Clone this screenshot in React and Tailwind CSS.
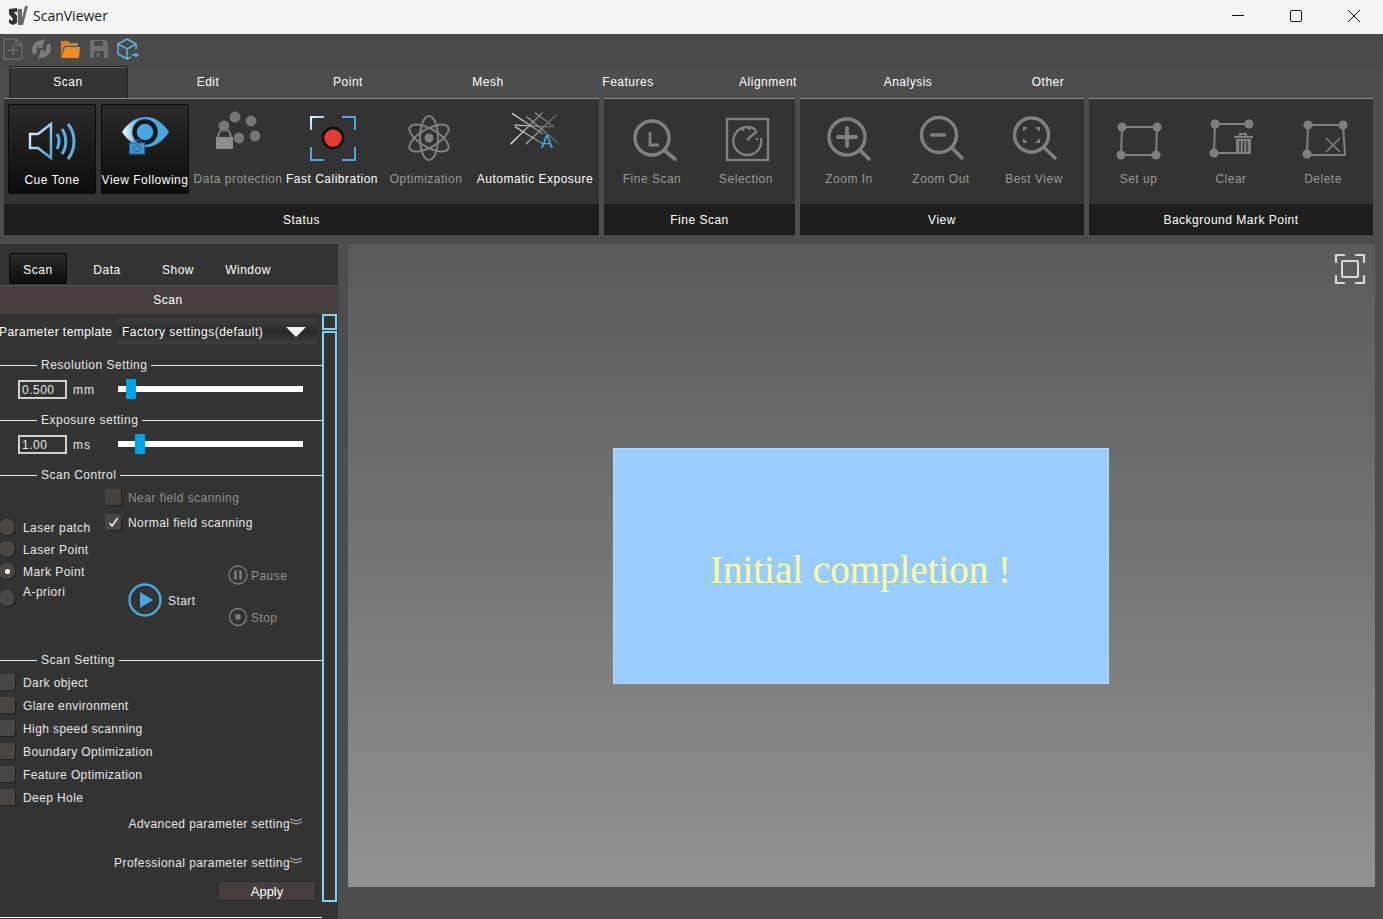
const Ring = ({ cx, cy, r = 17, x2, y2, c = "#808080" }) => (
  <>
    <circle cx={cx} cy={cy} r={r} fill="none" stroke={c} strokeWidth="3.4" />
    <path d={`M${cx + r * 0.72} ${cy + r * 0.72}L${x2} ${y2}`} stroke={c} strokeWidth="3.6" strokeLinecap="round" />
  </>
);

const Corners = ({ x1, y1, x2, y2, w = 2 }) => (
  <g fill="none" strokeWidth={w}>
    <path d={`M${x1} ${y1 + 13}V${y1}H${x1 + 13}`} stroke="url(#whiteBlue)" />
    <path d={`M${x2 - 13} ${y1}H${x2}V${y1 + 13}`} stroke="#4aa8e0" />
    <path d={`M${x1} ${y2 - 13}V${y2}H${x1 + 13}`} stroke="#4aa8e0" />
    <path d={`M${x2 - 13} ${y2}H${x2}V${y2 - 13}`} stroke="#4aa8e0" />
  </g>
);

const Dots = ({ pts }) => pts.map(([x, y]) => <circle key={`${x}-${y}`} cx={x} cy={y} r="4.5" fill="#808080" />);

const icons = {
  tone: (
    <>
      <path d="M8 23h8l13-10v34L16 37H8z" fill="none" stroke="url(#whiteBlue)" strokeWidth="2.4" />
      <path d="M35 23c2.500 4 2.500 10 0 15M40 18c5 7 5 18 0 25M46 13c8 10 8 25 0 35" fill="none" stroke="#58b2e6" strokeWidth="3" />
    </>
  ),
  eye: (
    <>
      <path d="M7 21C16 7 27 6 31 6c9 0 17 6 23 15-6 9-14 15-23 15-10 0-18-6-24-15z" fill="url(#eyeFill)" />
      <circle cx="30" cy="21" r="10.500" fill="#4aa8e0" stroke="#15181b" strokeWidth="4.500" />
      <rect x="14.500" y="32" width="15" height="11" fill="#3f95cb" stroke="#1d6d9f" strokeWidth="1" />
      <path d="M18 32l2-3h5l2 3" fill="none" stroke="#1d6d9f" />
      <circle cx="22" cy="37.500" r="3.200" fill="none" stroke="#1d6d9f" />
    </>
  ),
  lock: (
    <>
      <path d="M10 28c0-12 13-12 13 0" fill="none" stroke="#8c8c8c" strokeWidth="1.600" />
      <circle cx="27" cy="7" r="5.400" fill="#777" />
      <circle cx="43" cy="11" r="5.400" fill="#777" />
      <circle cx="16" cy="16" r="5.400" fill="#777" />
      <circle cx="31" cy="28" r="5.400" fill="#777" />
      <circle cx="47" cy="26" r="5.400" fill="#777" />
      <rect x="8" y="27" width="17" height="12" fill="#8c8c8c" />
    </>
  ),
  calibrate: (
    <>
      <Corners x1={9} y1={7} x2={53} y2={50} />
      <circle cx="31" cy="28" r="10" fill="#e53a33" stroke="#0c0c0c" strokeWidth="2.500" />
    </>
  ),
  atom: (
    <g fill="none" stroke="#808080" strokeWidth="2">
      <ellipse cx="33" cy="28" rx="22" ry="9" transform="rotate(90 33 28)" />
      <ellipse cx="33" cy="28" rx="22" ry="9" transform="rotate(30 33 28)" />
      <ellipse cx="33" cy="28" rx="22" ry="9" transform="rotate(-30 33 28)" />
      <circle cx="33" cy="28" r="4.500" fill="#808080" stroke="none" />
    </g>
  ),
  exposure: (
    <>
      <g stroke="url(#whiteGray)" strokeWidth="1.100">
        <path d="M7 3.300L38 24M30 2.700L49 16.700M10 16.700L38 34M21.700 6.700L53 33" />
        <path d="M37.700 2.300L5.700 34M51.700 4.300L21 34M9 15L49 17" />
      </g>
      <text x="36" y="38" fill="#4aa8e0" fontSize="18" fontFamily="Liberation Sans, sans-serif">A</text>
    </>
  ),
  fineScan: (
    <>
      <Ring cx={30} cy={28} r={17} x2={53} y2={49} />
      <path d="M28 22v13h9" fill="none" stroke="#808080" strokeWidth="2.800" />
    </>
  ),
  selection: (
    <>
      <rect x="11" y="9" width="41" height="41" fill="none" stroke="#808080" strokeWidth="2.400" />
      <path d="M40 20a14 14 0 1 0 5 8" fill="none" stroke="#808080" strokeWidth="2.400" />
      <path d="M31 30l10-9" stroke="#808080" strokeWidth="2.400" />
      <circle cx="27" cy="20" r="1" fill="#aaa" />
      <circle cx="33" cy="19" r="1" fill="#aaa" />
      <circle cx="41" cy="29" r="1" fill="#aaa" />
    </>
  ),
  zoomIn: (
    <>
      <Ring cx={28} cy={27} r={18} x2={50} y2={49} />
      <path d="M19 27h18M28 18v18" stroke="#808080" strokeWidth="3.800" strokeLinecap="round" />
    </>
  ),
  zoomOut: (
    <>
      <Ring cx={28} cy={25} r={17.500} x2={51} y2={48} />
      <path d="M20.500 25h13" stroke="#808080" strokeWidth="3.600" strokeLinecap="round" />
    </>
  ),
  bestView: (
    <>
      <Ring cx={27.500} cy={25} r={17} x2={51} y2={48} />
      <path d="M20 21v-3h3M32 18h3v3M20 29v3h3M32 32h3v-3" fill="none" stroke="#808080" strokeWidth="2" />
    </>
  ),
  setUp: (
    <>
      <path d="M13 17H48L47 45H12Z" fill="none" stroke="#808080" strokeWidth="2" />
      <Dots pts={[[13, 17], [48, 17], [12, 45], [47, 45]]} />
    </>
  ),
  clear: (
    <>
      <path d="M48 14H14L13 43H38" fill="none" stroke="#808080" strokeWidth="2" />
      <Dots pts={[[14, 14], [48, 14], [13, 43]]} />
      <path d="M33 27h19M39 27v-3h6v3" fill="none" stroke="#808080" strokeWidth="2" />
      <path d="M35 29h15v15H35z" fill="#808080" />
      <path d="M39 31v11M42.500 31v11M46 31v11" stroke="#333" strokeWidth="1.300" />
    </>
  ),
  del: (
    <>
      <path d="M15 15H50L52 45H14Z" fill="none" stroke="#808080" strokeWidth="2" />
      <Dots pts={[[15, 15], [50, 15], [14, 44]]} />
      <path d="M33 28l14 14M47 28L33 42" stroke="#808080" strokeWidth="1.600" />
    </>
  ),
};

const RibbonItem = ({ label, icon, width, on, box }) => (
  <div
    className={`mt-[5px] h-[90px] shrink-0 flex flex-col items-center pt-[6px] rounded-[2px] ${width} ${
      box ? "bg-gradient-to-b from-[#2b2b2b] to-[#0d0d0d] border border-[#0a0a0a]" : ""
    } ${on ? "text-white" : "text-[#9a9a9a]"}`}
  >
    <svg width="60" height="56" viewBox="0 0 60 56" className="shrink-0 overflow-visible">
      {icons[icon]}
    </svg>
    <span className="mt-[5px] h-[16px] leading-[16px] whitespace-nowrap">{label}</span>
  </div>
);

const RibbonGroup = ({ title, width, pad, children }) => (
  <div className={`flex flex-col shrink-0 border-t border-[#8c8c8c] ${width}`}>
    <div className={`h-[105px] bg-[#333333] flex ${pad}`}>{children}</div>
    <div className="h-[31px] pt-[2px] bg-[#1e1e1e] border-b border-[#151515] flex items-center justify-center text-white">{title}</div>
  </div>
);

const Legend = ({ title, className = "" }) => (
  <div className={`h-[16px] flex items-center ${className}`}>
    <div className="w-[37px] h-px bg-[#e8e8e8]" />
    <span className="mx-[4px] leading-[16px] text-[#e8e8e8]">{title}</span>
    <div className="flex-1 h-px bg-[#e8e8e8]" />
  </div>
);

const ValueSlider = ({ value, unit, handle, className = "" }) => (
  <div className={`h-[20px] pl-[18px] flex items-center ${className}`}>
    <div className="w-[49px] h-[19px] border-2 border-[#d0d0d0] pl-[2px] pt-[1px] leading-[15px] text-[#e8e8e8]">{value}</div>
    <span className="ml-[6px] w-[45px] pt-[2px] text-[#e8e8e8] tracking-[0.9px]">{unit}</span>
    <div className="relative w-[185px] h-[6px] bg-white">
      <div className={`absolute top-[-7px] w-[10px] h-[20px] bg-[#00a2e8] ${handle}`} />
    </div>
  </div>
);

const Box = ({ checked, dim }) => (
  <div className={`w-[16px] h-[16px] shrink-0 rounded-[2px] bg-[#4a4644] shadow-[1px_1px_1px_#222] flex items-center justify-center ${dim ? "opacity-80" : ""}`}>
    {checked && (
      <svg width="11" height="11" viewBox="0 0 11 11">
        <path d="M1.500 6l2.500 3 5.500-8" fill="none" stroke="#f2f2f2" strokeWidth="1.500" />
      </svg>
    )}
  </div>
);

const Radio = ({ on }) => (
  <div className="ml-[-1px] w-[16px] h-[16px] shrink-0 rounded-full bg-[#4a4644] shadow-[1px_1px_1px_#222] flex items-center justify-center">
    {on && <div className="w-[5px] h-[5px] rounded-full bg-white" />}
  </div>
);

const Chevrons = () => (
  <svg width="12" height="7" viewBox="0 0 12 7" className="mb-[4px]">
    <path d="M0 1l6 2 6-2M0 4l6 2 6-2" fill="none" stroke="#bdbdbd" strokeWidth="1" />
  </svg>
);

const settings = ["Dark object", "Glare environment", "High speed scanning", "Boundary Optimization", "Feature Optimization", "Deep Hole"];

export default function App() {
  return (
    <div className="w-[1383px] h-[919px] overflow-hidden flex flex-col bg-[#4d4d4d] font-['Liberation_Sans',Arial,sans-serif] text-[12px] tracking-[0.5px] text-white">
      <svg width="0" height="0" className="absolute">
        <defs>
          <linearGradient id="whiteBlue" x1="0" y1="0" x2="1" y2="1">
            <stop offset="0" stopColor="#f4f8fb" />
            <stop offset="1" stopColor="#4aa8e0" />
          </linearGradient>
          <linearGradient id="eyeFill" x1="0" y1="0" x2="1" y2="0">
            <stop offset="0" stopColor="#ffffff" />
            <stop offset="0.35" stopColor="#4aa8e0" />
            <stop offset="1" stopColor="#4aa8e0" />
          </linearGradient>
          <linearGradient id="whiteGray" gradientUnits="userSpaceOnUse" x1="6" y1="0" x2="52" y2="0">
            <stop offset="0" stopColor="#ffffff" />
            <stop offset="0.45" stopColor="#a8a8a8" />
            <stop offset="1" stopColor="#666666" />
          </linearGradient>
        </defs>
      </svg>

      {/* title bar */}
      <div className="h-[34px] pb-[3px] shrink-0 bg-[#f3f3f3] flex items-center text-[#1a1a1a]">
        <svg width="20" height="20" viewBox="0 0 20 20" className="ml-[8px]">
          <path d="M1 3l8-1v4H6l3 4v7l-4 2-4-2v-4l3 2 1-2-4-5z" fill="#333333" />
          <path d="M9.500 3h4.500v9l3-12h3l-5 19h-5z" fill="#666666" />
        </svg>
        <span className="ml-[5px] font-['Open_Sans',sans-serif] text-[14px] tracking-normal">ScanViewer</span>
        <div className="ml-auto flex">
          <div className="w-[58px] h-[31px] flex items-center justify-center">
            <svg width="12" height="12" viewBox="0 0 12 12"><path d="M0 5.500h12" stroke="#111" strokeWidth="1" /></svg>
          </div>
          <div className="w-[58px] h-[31px] flex items-center justify-center">
            <svg width="12" height="12" viewBox="0 0 12 12"><rect x="0.500" y="0.500" width="11" height="11" rx="1.500" fill="none" stroke="#111" /></svg>
          </div>
          <div className="w-[58px] h-[31px] flex items-center justify-center">
            <svg width="12" height="12" viewBox="0 0 12 12"><path d="M0 0l12 12M12 0L0 12" stroke="#111" strokeWidth="1" /></svg>
          </div>
        </div>
      </div>

      {/* quick toolbar */}
      <div className="h-[32px] pb-[2px] shrink-0 flex items-center gap-[8px] pl-[3px] bg-[#4a4a4a]">
        <svg width="20" height="22" viewBox="0 0 20 22">
          <path d="M1 1h12l6 6v14H1zM13 1v6h6" fill="none" stroke="#6a6a6a" strokeWidth="1.500" />
          <path d="M10 7v10M5 12h10" stroke="#6f6f6f" strokeWidth="1.300" />
        </svg>
        <svg width="21" height="22" viewBox="0 0 21 22">
          <path d="M1 12C1 6 6 2 12 2l2-1-3 9H7l2-3C6 8 5 11 6 14l-3 3C2 16 1 14 1 12z" fill="#7d7d7d" />
          <path d="M20 10c0 6-5 10-11 10l-2 1 3-9h4l-2 3c3-1 4-4 3-7l3-3c1 1 2 3 2 5z" fill="#7d7d7d" />
        </svg>
        <svg width="21" height="20" viewBox="0 0 21 20">
          <path d="M1 2h7l2 2h8v3H4L1 18z" fill="#e07f22" />
          <path d="M5 8h15l-1 11H1z" fill="#f08a24" />
        </svg>
        <svg width="20" height="20" viewBox="0 0 20 20">
          <path d="M1 1h15l3 3v15H1z" fill="#6f6f6f" />
          <path d="M5 2h9v5H5z" fill="#4a4a4a" />
          <path d="M5 12h10v7H5z" fill="#4a4a4a" />
          <path d="M8 14h2v5H8z" fill="#6f6f6f" />
        </svg>
        <svg width="23" height="22" viewBox="0 0 23 22">
          <path d="M10 1l9 5v5M10 1L1 6v10l9 5 4-2M1 6l9 5 9-5M10 11v10" fill="none" stroke="#5eb6e8" strokeWidth="1.500" />
          <path d="M15 17h7M19 15v4" stroke="#5eb6e8" strokeWidth="1.500" />
        </svg>
      </div>

      {/* ribbon tabs */}
      <div className="h-[32px] shrink-0 flex ml-[-2px]">
        {["Scan", "Edit", "Point", "Mesh", "Features", "Alignment", "Analysis", "Other"].map((t, i) => (
          <div key={t} className="w-[140px] flex justify-center">
            {i === 0 ? (
              <div className="w-[119px] h-[33px] pb-[2px] bg-[#333333] border border-[#222] border-b-0 shadow-[inset_0_1px_0_#666] flex items-center justify-center">{t}</div>
            ) : (
              <div className="flex items-center pb-[1px]">{t}</div>
            )}
          </div>
        ))}
      </div>

      {/* ribbon */}
      <div className="h-[137px] shrink-0 flex pl-[4px] gap-[5px]">
        <RibbonGroup title="Status" width="w-[595px]" pad="pl-[4px]">
          <RibbonItem label="Cue Tone" icon="tone" width="w-[88px] mr-[5px]" on box />
          <RibbonItem label="View Following" icon="eye" width="w-[88px] mr-[3px]" on box />
          <RibbonItem label="Data protection" icon="lock" width="w-[92px]" />
          <RibbonItem label="Fast Calibration" icon="calibrate" width="w-[96px]" on />
          <RibbonItem label="Optimization" icon="atom" width="w-[92px]" />
          <RibbonItem label="Automatic Exposure" icon="exposure" width="w-[126px]" on />
        </RibbonGroup>
        <RibbonGroup title="Fine Scan" width="w-[191px]" pad="">
          <RibbonItem label="Fine Scan" icon="fineScan" width="w-[96px]" />
          <RibbonItem label="Selection" icon="selection" width="w-[92px]" />
        </RibbonGroup>
        <RibbonGroup title="View" width="w-[284px]" pad="pl-[3px]">
          <RibbonItem label="Zoom In" icon="zoomIn" width="w-[92px]" />
          <RibbonItem label="Zoom Out" icon="zoomOut" width="w-[92px]" />
          <RibbonItem label="Best View" icon="bestView" width="w-[94px]" />
        </RibbonGroup>
        <RibbonGroup title="Background Mark Point" width="w-[284px]" pad="pl-[3px]">
          <RibbonItem label="Set up" icon="setUp" width="w-[93px]" />
          <RibbonItem label="Clear" icon="clear" width="w-[92px]" />
          <RibbonItem label="Delete" icon="del" width="w-[92px]" />
        </RibbonGroup>
      </div>

      <div className="flex-1 flex mt-[9px] min-h-0">
        {/* left panel */}
        <div className="w-[338px] shrink-0 bg-[#333333] flex flex-col">
          <div className="h-[41px] shrink-0 pt-[9px] flex">
            <div className="ml-[9px] w-[58px] h-[31px] pt-[2px] rounded-[2px] bg-gradient-to-b from-[#2b2b2b] to-[#0d0d0d] border border-[#0a0a0a] flex items-center justify-center">Scan</div>
            <div className="ml-[13px] w-[54px] h-[31px] pt-[2px] flex items-center justify-center">Data</div>
            <div className="ml-[17px] w-[54px] h-[31px] pt-[2px] flex items-center justify-center">Show</div>
            <div className="ml-[16px] w-[54px] h-[31px] pt-[2px] flex items-center justify-center">Window</div>
          </div>
          <div className="h-[29px] shrink-0 pr-[2px] bg-[#45403f] rounded-tr-[3px] border-t border-[#555] flex items-center justify-center">Scan</div>

          <div className="flex flex-1 min-h-0">
            <div className="w-[322px] shrink-0 flex flex-col">
              <div className="mt-[5px] h-[25px] flex items-center">
                <span className="ml-[-1px] w-[118px] whitespace-nowrap tracking-[0.45px]">Parameter template</span>
                <div className="w-[200px] h-[25px] bg-gradient-to-b from-[#3e3e3e] via-[#2a2a2a] to-[#3e3e3e] flex items-center pl-[5px]">
                  <span>Factory settings(default)</span>
                  <svg width="20" height="10" viewBox="0 0 20 10" className="ml-auto mr-[11px]">
                    <path d="M0 0h20L10 10z" fill="#f4f4f4" />
                  </svg>
                </div>
              </div>

              <Legend title="Resolution Setting" className="mt-[13px]" />
              <ValueSlider value="0.500" unit="mm" handle="left-[8px]" className="mt-[6px]" />
              <Legend title="Exposure setting" className="mt-[13px]" />
              <ValueSlider value="1.00" unit="ms" handle="left-[17px]" className="mt-[6px]" />
              <Legend title="Scan Control" className="mt-[13px]" />

              <div className="h-[169px] flex text-[#e8e8e8] tracking-[0.45px]">
                <div className="w-[105px] shrink-0 pt-[36px]">
                  <div className="h-[16px] flex items-center gap-[8px]"><Radio /><span className="pt-[2px]">Laser patch</span></div>
                  <div className="mt-[6px] h-[16px] flex items-center gap-[8px]"><Radio /><span className="pt-[2px]">Laser Point</span></div>
                  <div className="mt-[6px] h-[16px] flex items-center gap-[8px]"><Radio on /><span className="pt-[2px]">Mark Point</span></div>
                  <div className="mt-[4px] flex items-start gap-[8px]">
                    <div className="mt-[7px]"><Radio /></div>
                    <span className="leading-[16px] pt-[1px]">A-priori</span>
                  </div>
                </div>
                <div className="flex-1 pt-[6px]">
                  <div className="h-[16px] flex items-center gap-[7px] text-[#8f8f8f]"><Box dim /><span className="pt-[2px]">Near field scanning</span></div>
                  <div className="mt-[9px] h-[16px] flex items-center gap-[7px]"><Box checked /><span className="pt-[2px]">Normal field scanning</span></div>
                  <div className="mt-[35px] ml-[23px] flex items-start">
                    <div className="mt-[18px] w-[100px] flex items-center gap-[6px]">
                      <svg width="34" height="34" viewBox="0 0 34 34">
                        <circle cx="17" cy="17" r="15.500" fill="none" stroke="#4aa8e0" strokeWidth="2.400" />
                        <path d="M12 9l13 8-13 8z" fill="#4aa8e0" />
                      </svg>
                      <span className="pt-[2px]">Start</span>
                    </div>
                    <div className="flex flex-col text-[#8f8f8f]">
                      <div className="h-[20px] flex items-center gap-[3px]">
                        <svg width="20" height="20" viewBox="0 0 20 20">
                          <circle cx="10" cy="10" r="9" fill="none" stroke="#808080" strokeWidth="1.300" />
                          <path d="M7.500 5.500v9M12.500 5.500v9" stroke="#808080" strokeWidth="2.400" />
                        </svg>
                        <span className="pt-[2px]">Pause</span>
                      </div>
                      <div className="mt-[22px] h-[20px] flex items-center gap-[3px]">
                        <svg width="20" height="20" viewBox="0 0 20 20">
                          <circle cx="10" cy="10" r="8.500" fill="none" stroke="#808080" strokeWidth="1.300" />
                          <rect x="7.500" y="7.500" width="5" height="5" fill="#808080" />
                        </svg>
                        <span className="pt-[2px]">Stop</span>
                      </div>
                    </div>
                  </div>
                </div>
              </div>

              <Legend title="Scan Setting" />
              <div className="mt-[6px] flex flex-col gap-[7px] text-[#e8e8e8] tracking-[0.4px]">
                {settings.map((s) => (
                  <div key={s} className="h-[16px] flex items-center gap-[8px]">
                    <div className="ml-[-1px]"><Box /></div>
                    <span className="pt-[2px]">{s}</span>
                  </div>
                ))}
              </div>
              <div className="mt-[10px] h-[16px] pr-[20px] flex items-center justify-end text-[#e8e8e8] tracking-[0.44px]">
                <span className="pt-[2px]">Advanced parameter setting</span><Chevrons />
              </div>
              <div className="mt-[23px] h-[16px] pr-[20px] flex items-center justify-end text-[#e8e8e8] tracking-[0.44px]">
                <span className="pt-[2px]">Professional parameter setting</span><Chevrons />
              </div>
              <div className="mt-[11px] flex justify-end pr-[6px]">
                <div className="w-[98px] h-[20px] pt-[1px] rounded-[2px] bg-[#45403f] border border-[#2a2a2a] flex items-center justify-center text-[13px] tracking-normal">Apply</div>
              </div>
              <div className="mt-[16px] h-px bg-white" />
            </div>
            <div className="w-[15px] shrink-0 flex flex-col gap-[1px]">
              <div className="h-[16px] border-2 border-[#7fd4f4]" />
              <div className="h-[571px] border-2 border-[#7fd4f4]" />
            </div>
          </div>
        </div>

        {/* viewer */}
        <div className="relative ml-[10px] w-[1027px] h-[643px] shrink-0 pr-[2px] bg-gradient-to-b from-[#5a5a5a] to-[#929292] flex items-center justify-center">
          <div className="w-[496px] h-[236px] pt-[9px] bg-[#99ccff] border border-[#b8d8f8] border-l-[#d4d4d4] flex items-center justify-center">
            <span className="font-['Liberation_Serif',serif] text-[39px] tracking-normal text-[#ffff99]">Initial completion !</span>
          </div>
          <svg width="32" height="32" viewBox="0 0 32 32" className="absolute top-[9px] right-[9px]">
            <path d="M2 9V2h8M22 2h8v7M2 23v7h8M22 30h8v-7" fill="none" stroke="#d9d9d9" strokeWidth="2.200" strokeLinecap="round" strokeLinejoin="round" />
            <rect x="8" y="8" width="16" height="16" rx="1" fill="none" stroke="#d9d9d9" strokeWidth="2" />
          </svg>
        </div>
      </div>
    </div>
  );
}
